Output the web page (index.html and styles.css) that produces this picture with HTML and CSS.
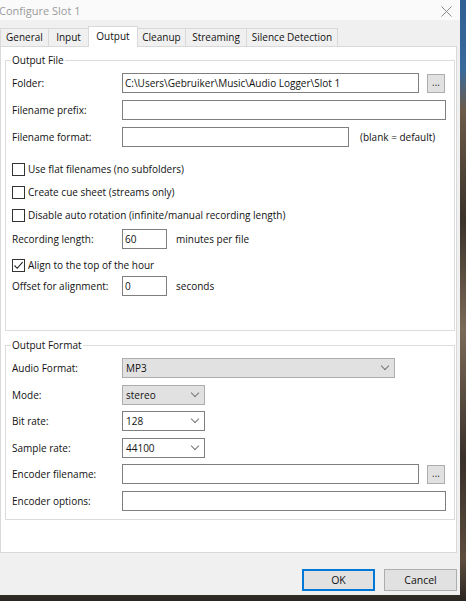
FILE: index.html
```html
<!DOCTYPE html>
<html lang="en">
<head>
<meta charset="UTF-8">
<meta name="viewport" content="width=device-width, initial-scale=1.0">
<title>Configure Slot 1</title>
<link rel="stylesheet" href="styles.css">
</head>
<body>
<div class="window">
  <div class="titlebar">
    <span class="title">Configure Slot 1</span>
    <svg class="close" width="11" height="11" viewBox="0 0 11 11"><path d="M0.5 0.5 L10.5 10.5 M10.5 0.5 L0.5 10.5" stroke="#8a8a8a" stroke-width="1" fill="none"/></svg>
  </div>

  <div class="tabs">
    <div class="tab tab-general">General</div>
    <div class="tab tab-input">Input</div>
    <div class="tab tab-output active">Output</div>
    <div class="tab tab-cleanup">Cleanup</div>
    <div class="tab tab-streaming">Streaming</div>
    <div class="tab tab-silence">Silence Detection</div>
  </div>

  <div class="page">
    <fieldset class="group group-file">
      <legend>Output File</legend>
      <div class="row row-first">
        <span class="label">Folder:</span>
        <div class="field field-path">C:\Users\Gebruiker\Music\Audio Logger\Slot 1</div>
        <div class="browse">...</div>
      </div>
      <div class="row">
        <span class="label">Filename prefix:</span>
        <div class="field field-full"></div>
      </div>
      <div class="row">
        <span class="label">Filename format:</span>
        <div class="field field-format"></div>
        <span class="hint">(blank = default)</span>
      </div>
      <div class="check check-first"><span class="box"></span>Use flat filenames (no subfolders)</div>
      <div class="check"><span class="box"></span>Create cue sheet (streams only)</div>
      <div class="check"><span class="box"></span>Disable auto rotation (infinite/manual recording length)</div>
      <div class="row row-length">
        <span class="label">Recording length:</span>
        <div class="field field-small">60</div>
        <span class="unit">minutes per file</span>
      </div>
      <div class="check check-align">
        <span class="box"><svg width="11" height="11" viewBox="0 0 11 11"><path d="M1.5 5.5 L4.2 8.3 L9.6 2.2" stroke="#222" stroke-width="1.1" fill="none"/></svg></span>Align to the top of the hour
      </div>
      <div class="row row-offset">
        <span class="label">Offset for alignment:</span>
        <div class="field field-small">0</div>
        <span class="unit">seconds</span>
      </div>
    </fieldset>

    <fieldset class="group group-format">
      <legend>Output Format</legend>
      <div class="row row-first">
        <span class="label">Audio Format:</span>
        <div class="select select-gray select-wide">MP3<span class="chevron"></span></div>
      </div>
      <div class="row">
        <span class="label">Mode:</span>
        <div class="select select-gray">stereo<span class="chevron"></span></div>
      </div>
      <div class="row">
        <span class="label">Bit rate:</span>
        <div class="select">128<span class="chevron"></span></div>
      </div>
      <div class="row">
        <span class="label">Sample rate:</span>
        <div class="select">44100<span class="chevron"></span></div>
      </div>
      <div class="row">
        <span class="label">Encoder filename:</span>
        <div class="field field-path"></div>
        <div class="browse">...</div>
      </div>
      <div class="row">
        <span class="label">Encoder options:</span>
        <div class="field field-full"></div>
      </div>
    </fieldset>
  </div>

  <div class="footer">
    <button class="btn btn-ok">OK</button>
    <button class="btn">Cancel</button>
  </div>
</div>
</body>
</html>
```

FILE: styles.css
```css
body {
  margin: 0;
  width: 466px;
  height: 601px;
  overflow: hidden;
  font-family: "Open Sans", "Noto Sans", sans-serif;
  font-size: 10px;
  color: #111;
  background: linear-gradient(to bottom, #2f5f93 0, #3a6a9a 70px, #6c5b49 110px, #3b322a 220px, #7a6a58 330px, #3a302a 460px, #5c4d3e 560px, #2b2622 601px);
}

.window {
  width: 460px;
  height: 595px;
  background-color: #f0f0f0;
  display: flex;
  flex-direction: column;
}

.titlebar {
  height: 20px;
  background-color: #fafafa;
  display: flex;
  align-items: center;
  justify-content: space-between;
  padding-right: 8px;
}

.title {
  color: #9a9a9a;
  font-size: 11px;
  margin-left: -1px;
}

.close {
  margin-top: 2px;
}

.tabs {
  height: 26px;
  display: flex;
  align-items: flex-end;
}

.tab {
  height: 18px;
  line-height: 17px;
  box-sizing: border-box;
  border: 1px solid #d9d9d9;
  border-bottom: none;
  margin-right: -1px;
  text-align: center;
  background-color: #f0f0f0;
}

.tab.active {
  height: 21px;
  line-height: 18px;
  background-color: #fff;
  margin-bottom: -1px;
  position: relative;
  z-index: 1;
}

.tab-general { width: 49px; }
.tab-input { width: 41px; }
.tab-output { width: 50px; }
.tab-cleanup { width: 49px; }
.tab-streaming { width: 62px; }
.tab-silence { width: 92px; }

.page {
  width: 457px;
  height: 507px;
  box-sizing: border-box;
  background-color: #fff;
  border: 1px solid #d9d9d9;
  padding: 6px 0 0 4px;
}

.group {
  width: 450px;
  box-sizing: border-box;
  margin: 0;
  padding: 0 0 0 6px;
  border: 1px solid #dcdcdc;
  display: flex;
  flex-direction: column;
}

.group legend {
  padding: 0 1px;
  margin-left: -1px;
  line-height: 14px;
}

.group-file {
  height: 278px;
}

.group-format {
  height: 182px;
  margin-top: 7px;
}

.row {
  display: flex;
  align-items: center;
  height: 20px;
  margin-top: 7px;
}

.group-format .row {
  margin-top: 6.6px;
}

.group-format .row-first,
.row-first {
  margin-top: 6px;
}

.row-length {
  margin-top: 4px;
}

.row-offset {
  margin-top: 1px;
}

.label {
  width: 110px;
}

.field {
  height: 20px;
  box-sizing: border-box;
  border: 1px solid #7f7f7f;
  padding-left: 2px;
  line-height: 18px;
}

.field-path { width: 297px; }
.field-full { width: 324px; }
.field-format { width: 227px; }
.field-small { width: 45px; }

.hint {
  margin-left: 11px;
}

.unit {
  margin-left: 9px;
}

.browse {
  width: 18px;
  height: 19px;
  box-sizing: border-box;
  margin-left: 8px;
  border: 1px solid #adadad;
  background-color: #e1e1e1;
  text-align: center;
  line-height: 15px;
  color: #333;
}

.check {
  display: flex;
  align-items: center;
  height: 20px;
  margin-top: 3px;
}

.check-first {
  margin-top: 12px;
}

.check-align {
  margin-top: 6px;
}

.box {
  width: 13px;
  height: 13px;
  box-sizing: border-box;
  border: 1px solid #333;
  background-color: #fff;
  margin-right: 3px;
  display: flex;
  align-items: center;
  justify-content: center;
}

.select {
  width: 83px;
  height: 20px;
  box-sizing: border-box;
  border: 1px solid #7f7f7f;
  padding-left: 3px;
  line-height: 18px;
  position: relative;
  background-color: #fff;
}

.select-gray {
  border-color: #adadad;
  background-color: #e1e1e1;
}

.select-wide {
  width: 273px;
}

.chevron {
  position: absolute;
  right: 6px;
  top: 4px;
  width: 5px;
  height: 5px;
  border-right: 1px solid #777;
  border-bottom: 1px solid #777;
  transform: rotate(45deg);
}

.footer {
  flex: 1;
  display: flex;
  justify-content: flex-end;
  align-items: flex-start;
  gap: 9px;
  padding: 16px 3px 0 0;
}

.btn {
  width: 73px;
  height: 22px;
  border: 1px solid #adadad;
  background-color: #e1e1e1;
  font-family: "Open Sans", "Noto Sans", sans-serif;
  font-size: 10.5px;
  color: #111;
  padding: 0;
}

.btn-ok {
  border: 2px solid #0078d7;
}
```
